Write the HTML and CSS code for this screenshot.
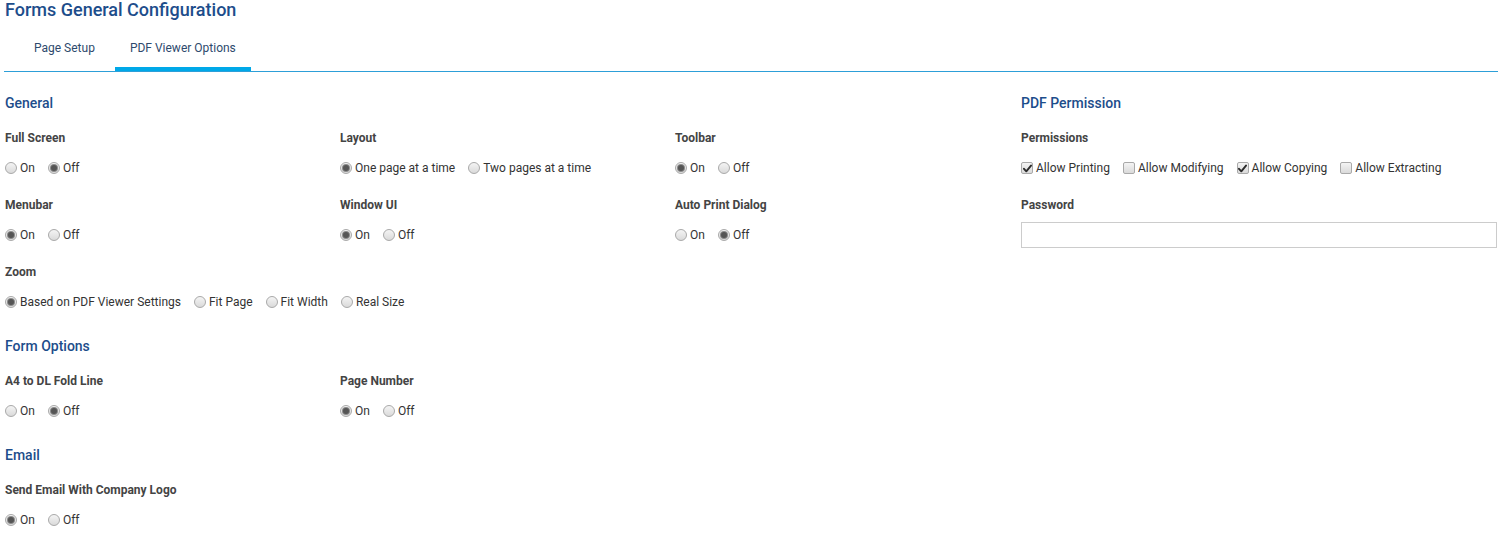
FILE: index.html
```html
<!DOCTYPE html>
<html lang="en">
<head>
<meta charset="utf-8">
<title>Forms General Configuration</title>
<link rel="stylesheet" href="styles.css">
</head>
<body>
<div class="page">
  <h1 class="title">Forms General Configuration</h1>
  <nav class="tabs">
    <a class="tab">Page Setup</a>
    <a class="tab active">PDF Viewer Options</a>
  </nav>
  <div class="content">
    <div class="main">
      <section class="section">
        <h2 class="heading">General</h2>
        <div class="grid">
          <div class="field">
            <div class="label">Full Screen</div>
            <div class="opts">
              <label class="opt"><span class="radio"></span>On</label>
              <label class="opt"><span class="radio on"></span>Off</label>
            </div>
          </div>
          <div class="field">
            <div class="label">Layout</div>
            <div class="opts">
              <label class="opt"><span class="radio on"></span>One page at a time</label>
              <label class="opt"><span class="radio"></span>Two pages at a time</label>
            </div>
          </div>
          <div class="field">
            <div class="label">Toolbar</div>
            <div class="opts">
              <label class="opt"><span class="radio on"></span>On</label>
              <label class="opt"><span class="radio"></span>Off</label>
            </div>
          </div>
          <div class="field">
            <div class="label">Menubar</div>
            <div class="opts">
              <label class="opt"><span class="radio on"></span>On</label>
              <label class="opt"><span class="radio"></span>Off</label>
            </div>
          </div>
          <div class="field">
            <div class="label">Window UI</div>
            <div class="opts">
              <label class="opt"><span class="radio on"></span>On</label>
              <label class="opt"><span class="radio"></span>Off</label>
            </div>
          </div>
          <div class="field">
            <div class="label">Auto Print Dialog</div>
            <div class="opts">
              <label class="opt"><span class="radio"></span>On</label>
              <label class="opt"><span class="radio on"></span>Off</label>
            </div>
          </div>
          <div class="field wide">
            <div class="label">Zoom</div>
            <div class="opts">
              <label class="opt"><span class="radio on"></span>Based on PDF Viewer Settings</label>
              <label class="opt"><span class="radio"></span>Fit Page</label>
              <label class="opt"><span class="radio"></span>Fit Width</label>
              <label class="opt"><span class="radio"></span>Real Size</label>
            </div>
          </div>
        </div>
      </section>
      <section class="section">
        <h2 class="heading">Form Options</h2>
        <div class="grid">
          <div class="field">
            <div class="label">A4 to DL Fold Line</div>
            <div class="opts">
              <label class="opt"><span class="radio"></span>On</label>
              <label class="opt"><span class="radio on"></span>Off</label>
            </div>
          </div>
          <div class="field">
            <div class="label">Page Number</div>
            <div class="opts">
              <label class="opt"><span class="radio on"></span>On</label>
              <label class="opt"><span class="radio"></span>Off</label>
            </div>
          </div>
        </div>
      </section>
      <section class="section">
        <h2 class="heading">Email</h2>
        <div class="grid">
          <div class="field wide">
            <div class="label">Send Email With Company Logo</div>
            <div class="opts">
              <label class="opt"><span class="radio on"></span>On</label>
              <label class="opt"><span class="radio"></span>Off</label>
            </div>
          </div>
        </div>
      </section>
    </div>
    <aside class="side">
      <section class="section">
        <h2 class="heading">PDF Permission</h2>
        <div class="field">
          <div class="label">Permissions</div>
          <div class="opts">
            <label class="opt"><span class="check on"><svg viewBox="0 0 13 13" width="13" height="13"><path d="M3 6.8 L5.3 9.3 L10 3.6" fill="none" stroke="#2b2b2b" stroke-width="1.9" stroke-linecap="round" stroke-linejoin="round"/></svg></span>Allow Printing</label>
            <label class="opt"><span class="check"></span>Allow Modifying</label>
            <label class="opt"><span class="check on"><svg viewBox="0 0 13 13" width="13" height="13"><path d="M3 6.8 L5.3 9.3 L10 3.6" fill="none" stroke="#2b2b2b" stroke-width="1.9" stroke-linecap="round" stroke-linejoin="round"/></svg></span>Allow Copying</label>
            <label class="opt"><span class="check"></span>Allow Extracting</label>
          </div>
        </div>
        <div class="field">
          <div class="label">Password</div>
          <input class="input" type="password">
        </div>
      </section>
    </aside>
  </div>
</div>
</body>
</html>
```

FILE: styles.css
```css
* { box-sizing: border-box; }
html, body { margin: 0; padding: 0; background: #fff; }
body {
  font-family: Roboto, "Liberation Sans", Arial, sans-serif;
  font-size: 12px;
  color: #333;
}
.page { padding: 0 4px; }
.title {
  margin: 0;
  padding-left: 1px;
  font-size: 18px;
  line-height: 20px;
  font-weight: 500;
  color: #1d4d8b;
}
.tabs {
  margin-top: 8px;
  display: flex;
  gap: 5px;
  padding-left: 15px;
  border-bottom: 1px solid #2d9fd8;
}
.tab {
  display: block;
  padding: 12px 15px 11px;
  line-height: 16px;
  font-size: 12px;
  color: #2e4a6d;
  border-bottom: 4px solid transparent;
  cursor: pointer;
}
.tab.active { border-bottom-color: #00a8e8; }
.content {
  display: flex;
  padding-left: 1px;
  padding-top: 21px;
}
.main { width: 1016px; flex: none; }
.side { flex: 1; }
.section + .section { margin-top: 24px; }
.heading {
  margin: 0 0 17px;
  font-size: 14px;
  line-height: 20px;
  font-weight: 500;
  color: #1d4d8b;
}
.grid {
  display: grid;
  grid-template-columns: 335px 335px 335px;
  row-gap: 19px;
}
.field.wide { grid-column: 1 / -1; }
.side .field + .field { margin-top: 19px; }
.label {
  font-weight: 700;
  font-size: 12px;
  line-height: 16px;
  color: #444;
  margin-bottom: 12px;
}
.side .field + .field .label { margin-bottom: 9px; }
.opts {
  display: flex;
  align-items: center;
  height: 20px;
}
.opt {
  display: inline-flex;
  align-items: center;
  gap: 3px;
  margin-right: 13px;
  line-height: 20px;
  color: #333;
  white-space: nowrap;
}
.radio {
  width: 12px;
  height: 12px;
  border-radius: 50%;
  border: 1px solid #a9a9a9;
  background: linear-gradient(#f4f4f4, #dadada);
  display: inline-flex;
  align-items: center;
  justify-content: center;
  flex: none;
}
.radio.on::after {
  content: "";
  width: 6px;
  height: 6px;
  border-radius: 50%;
  background: #555;
  box-shadow: 0 0 0 1px #8a8a8a;
}
.check {
  width: 12px;
  height: 12px;
  border-radius: 2px;
  border: 1px solid #a9a9a9;
  background: linear-gradient(#f4f4f4, #dadada);
  display: inline-flex;
  align-items: center;
  justify-content: center;
  flex: none;
  overflow: hidden;
}
.check svg { display: block; flex: none; }
.input {
  display: block;
  width: 476px;
  height: 26px;
  border: 1px solid #ccc;
  background: #fff;
  padding: 2px 6px;
  font: inherit;
}
```
